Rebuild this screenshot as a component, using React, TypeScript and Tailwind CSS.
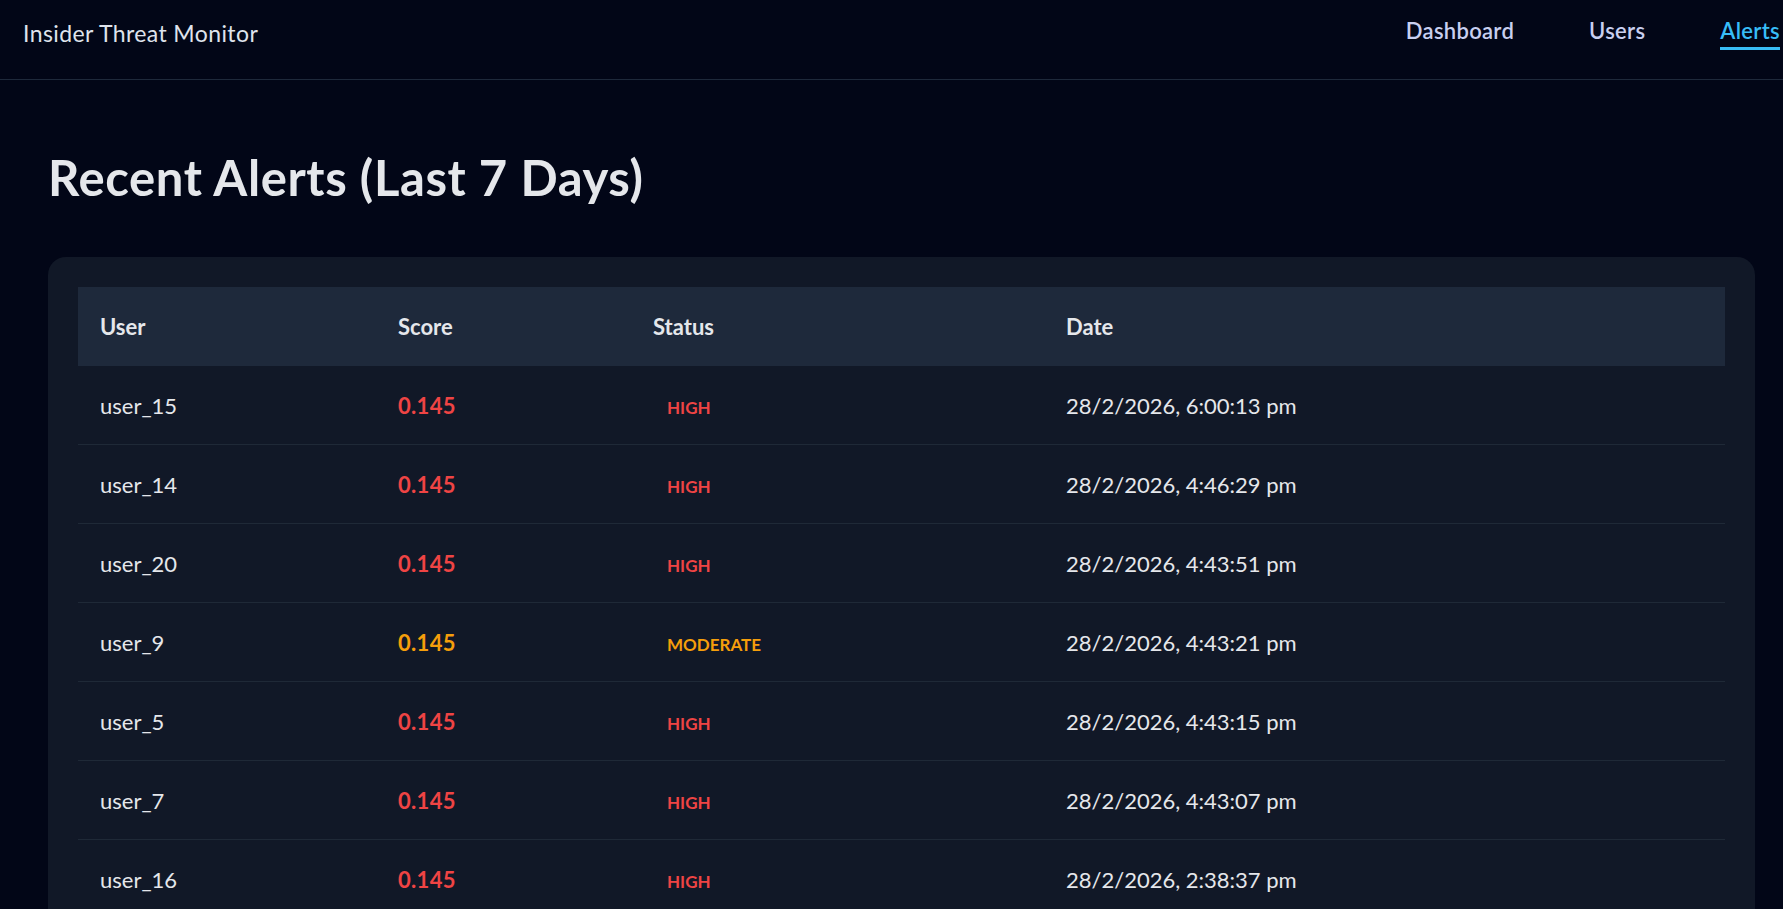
const alerts = [
  { user: 'user_15', score: '0.145', status: 'HIGH', date: '28/2/2026, 6:00:13 pm' },
  { user: 'user_14', score: '0.145', status: 'HIGH', date: '28/2/2026, 4:46:29 pm' },
  { user: 'user_20', score: '0.145', status: 'HIGH', date: '28/2/2026, 4:43:51 pm' },
  { user: 'user_9', score: '0.145', status: 'MODERATE', date: '28/2/2026, 4:43:21 pm' },
  { user: 'user_5', score: '0.145', status: 'HIGH', date: '28/2/2026, 4:43:15 pm' },
  { user: 'user_7', score: '0.145', status: 'HIGH', date: '28/2/2026, 4:43:07 pm' },
  { user: 'user_16', score: '0.145', status: 'HIGH', date: '28/2/2026, 2:38:37 pm' },
];

const cols = 'grid grid-cols-[298px_255px_413px_1fr]';

export default function App() {
  return (
    <div className="h-screen w-screen overflow-hidden bg-[#020617] font-['Lato','Liberation_Sans',sans-serif] text-[#e5e7eb]">
      <div className="w-[1803px]">
        {/* Top bar */}
        <header className="flex h-[80px] items-start justify-between border-b border-[#1e293b] px-[23px]">
          <div className="mt-[18px] text-[23px] leading-[30px] tracking-[0.4px] text-[#dfe3ec]">Insider Threat Monitor</div>
          <nav className="flex gap-[75px] text-[22px] font-semibold tracking-[0.3px]">
            <a className="mt-[16px] pb-[1px] leading-[30px] text-[#c8cff0] border-b-[3px] border-transparent">Dashboard</a>
            <a className="mt-[16px] pb-[1px] leading-[30px] text-[#c8cff0] border-b-[3px] border-transparent">Users</a>
            <a className="mt-[16px] pb-[1px] leading-[30px] text-[#38bdf8] border-b-[3px] border-[#38bdf8]">Alerts</a>
          </nav>
        </header>

        <main className="px-[48px] pt-[73px]">
          <h1 className="text-[49px] font-bold leading-[49px] tracking-[0.6px] text-[#e5e7eb]">Recent Alerts (Last 7 Days)</h1>

          <div className="mt-[55px] rounded-[18px] bg-[#111827] p-[30px]">
            <div className={`${cols} h-[79px] items-center bg-[#1e293b] text-[22px] font-bold`}>
              <div className="pl-[22px]">User</div>
              <div className="pl-[22px]">Score</div>
              <div className="pl-[22px]">Status</div>
              <div className="pl-[22px]">Date</div>
            </div>
            {alerts.map((a) => {
              const high = a.status === 'HIGH';
              return (
                <div key={a.user} className={`${cols} h-[79px] items-center border-b border-[#1f2937] text-[22px]`}>
                  <div className="pl-[22px]">{a.user}</div>
                  <div className={`pl-[22px] font-bold tracking-[0.3px] ${high ? 'text-[#ef4444]' : 'text-[#f59e0b]'}`}>{a.score}</div>
                  <div className="pl-[22px]">
                    <span className={`px-[14px] text-[17px] font-bold ${high ? 'text-[#ef4444]' : 'text-[#f59e0b]'}`}>
                      {a.status}
                    </span>
                  </div>
                  <div className="pl-[22px]">{a.date}</div>
                </div>
              );
            })}
          </div>
        </main>
      </div>
    </div>
  );
}
